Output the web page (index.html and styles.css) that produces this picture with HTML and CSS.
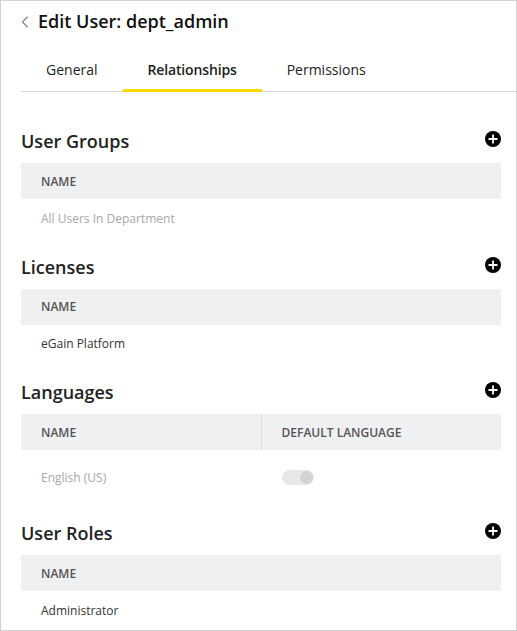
FILE: index.html
```html
<!DOCTYPE html>
<html lang="en">
<head>
  <meta charset="UTF-8">
  <title>Edit User</title>
  <link rel="stylesheet" href="styles.css">
</head>
<body>
  <div class="panel">
    <div class="title-bar">
      <svg class="back" width="8" height="12" viewBox="0 0 8 12"><path d="M6.5 0.8 L1.5 6 L6.5 11.2" fill="none" stroke="#888" stroke-width="1.3"/></svg>
      <h1>Edit User: dept_admin</h1>
    </div>
    <div class="tabs">
      <div class="tab">General</div>
      <div class="tab active">Relationships</div>
      <div class="tab">Permissions</div>
    </div>

    <div class="section first">
      <div class="section-head">
        <h2>User Groups</h2>
        <svg class="add" width="16" height="16" viewBox="0 0 16 16"><circle cx="8" cy="8" r="8" fill="#000"/><path d="M8 3.5v9M3.5 8h9" stroke="#fff" stroke-width="1.8"/></svg>
      </div>
      <div class="table-head"><div class="col">Name</div></div>
      <div class="row"><div class="col muted">All Users In Department</div></div>
    </div>

    <div class="section">
      <div class="section-head">
        <h2>Licenses</h2>
        <svg class="add" width="16" height="16" viewBox="0 0 16 16"><circle cx="8" cy="8" r="8" fill="#000"/><path d="M8 3.5v9M3.5 8h9" stroke="#fff" stroke-width="1.8"/></svg>
      </div>
      <div class="table-head"><div class="col">Name</div></div>
      <div class="row"><div class="col">eGain Platform</div></div>
    </div>

    <div class="section">
      <div class="section-head">
        <h2>Languages</h2>
        <svg class="add" width="16" height="16" viewBox="0 0 16 16"><circle cx="8" cy="8" r="8" fill="#000"/><path d="M8 3.5v9M3.5 8h9" stroke="#fff" stroke-width="1.8"/></svg>
      </div>
      <div class="table-head two">
        <div class="col">Name</div>
        <div class="col divided">Default Language</div>
      </div>
      <div class="row two tall">
        <div class="col muted">English (US)</div>
        <div class="col"><span class="toggle"><span class="knob"></span></span></div>
      </div>
    </div>

    <div class="section">
      <div class="section-head">
        <h2>User Roles</h2>
        <svg class="add" width="16" height="16" viewBox="0 0 16 16"><circle cx="8" cy="8" r="8" fill="#000"/><path d="M8 3.5v9M3.5 8h9" stroke="#fff" stroke-width="1.8"/></svg>
      </div>
      <div class="table-head"><div class="col">Name</div></div>
      <div class="row"><div class="col">Administrator</div></div>
    </div>
  </div>
</body>
</html>
```

FILE: styles.css
```css
html, body {
  margin: 0;
  background: #fff;
}
body {
  font-family: 'Open Sans', 'Segoe UI', Arial, sans-serif;
  color: #222;
}
.panel {
  box-sizing: border-box;
  width: 517px;
  height: 631px;
  border: 1px solid #d2d2d2;
  padding: 8px 15px 0 20px;
  overflow: hidden;
}
.title-bar {
  display: flex;
  align-items: center;
  height: 24px;
}
.back {
  margin-right: 9px;
  margin-top: 1px;
}
h1 {
  margin: 0;
  font-size: 18px;
  font-weight: 600;
  line-height: 24px;
  color: #111;
}
.tabs {
  display: flex;
  margin-top: 23px;
  margin-right: -15px;
  border-bottom: 1px solid #d6d6d6;
}
.tab {
  padding: 0 25px;
  height: 33px;
  line-height: 28px;
  font-size: 14px;
  color: #222;
  border-bottom: 3px solid transparent;
  margin-bottom: -1px;
}
.tab.active {
  border-bottom-color: #ffd700;
  font-weight: 600;
  letter-spacing: -0.15px;
}
.section {
  margin-top: 18px;
}
.section.first {
  margin-top: 38px;
}
.section-head {
  display: flex;
  justify-content: space-between;
  align-items: center;
  height: 22px;
  margin-bottom: 11px;
}
.section-head .add {
  margin-top: -4px;
}
h2 {
  margin: 0;
  font-size: 18px;
  font-weight: 600;
  line-height: 22px;
  color: #222;
}
.table-head {
  display: flex;
  height: 36px;
  background: #eff0f2;
}
.table-head .col {
  text-transform: uppercase;
  font-size: 12px;
  font-weight: 600;
  color: #555;
}
.row {
  display: flex;
  height: 38.5px;
}
.row.tall {
  height: 54px;
}
.col {
  flex: 1;
  display: flex;
  align-items: center;
  padding-left: 20px;
  font-size: 12px;
  color: #333;
}
.col.divided {
  border-left: 1px solid #dcdcdc;
}
.row.two .col:last-child {
  padding-left: 21px;
}
.col.muted {
  color: #a8a8a8;
}
.toggle {
  position: relative;
  display: inline-block;
  width: 32px;
  height: 15px;
  border-radius: 8px;
  background: #e8e8e8;
}
.knob {
  position: absolute;
  right: 1px;
  top: 1px;
  width: 13px;
  height: 13px;
  border-radius: 50%;
  background: #d3d3d3;
}
```
